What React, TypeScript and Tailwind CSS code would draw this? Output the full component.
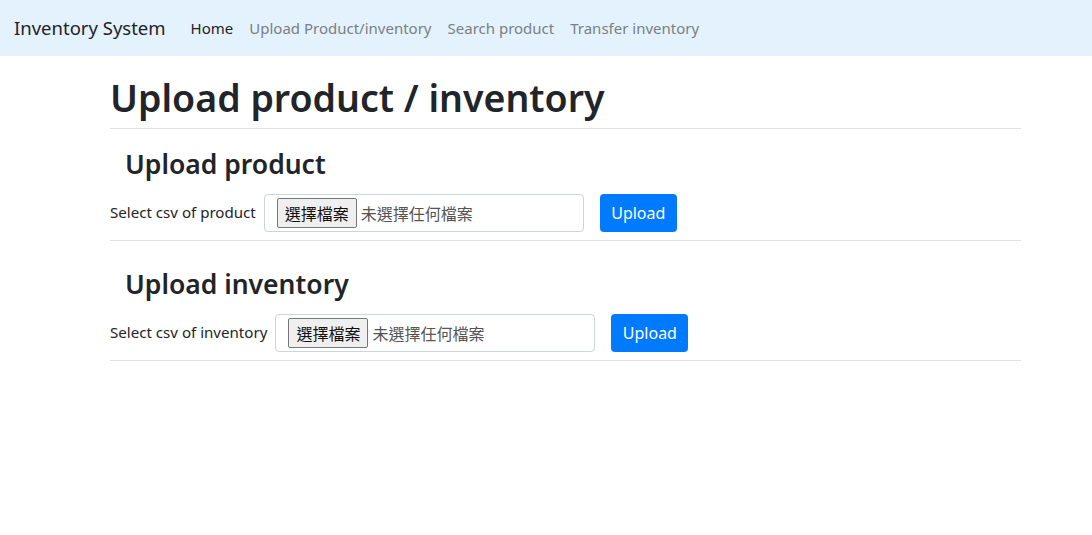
import React from "react";

const font = { fontFamily: '"Noto Sans", "Noto Sans CJK TC", sans-serif' };
const cjk = { fontFamily: '"Noto Sans CJK TC", sans-serif' };

function FileField() {
  return (
    <div className="flex h-[38px] w-[320px] items-center rounded-[4px] border border-[#ced4da] bg-white pl-[12px]">
      <span className="flex h-[30px] items-center rounded-[2px] border border-[#767676] bg-[#efefef] px-[7px] text-[16px] leading-none text-[#111]" style={cjk}>
        選擇檔案
      </span>
      <span className="ml-[4px] text-[16px] leading-none text-[#555]" style={cjk}>
        未選擇任何檔案
      </span>
    </div>
  );
}

function Section({ title, label, top }: { title: string; label: string; top: string }) {
  return (
    <div>
      <h3 className={`ml-[15px] ${top} text-[26.5px] font-semibold leading-[1.2] text-[#212529]`}>{title}</h3>
      <div className="mt-[13px] flex items-center">
        <label className="mr-[8px] text-[15.1px] text-[#212529]">{label}</label>
        <FileField />
        <button className="ml-[16px] h-[38px] w-[77px] rounded-[4px] bg-[#007bff] text-[16px] text-white">Upload</button>
      </div>
      <hr className="mt-[8px] border-t border-[#e2e2e2]" />
    </div>
  );
}

export default function App() {
  return (
    <div className="min-h-[535px] bg-white" style={font}>
      <nav className="flex h-[56px] items-center bg-[#e3f2fd] px-[14px]">
        <span className="mr-[17px] text-[18.5px] text-[#1f2326]">Inventory System</span>
        <div className="flex text-[15px]">
          <a className="px-[8px] text-[#1f2326]">Home</a>
          <a className="px-[8px] text-[#7b7f83]">Upload Product/inventory</a>
          <a className="px-[8px] text-[#7b7f83]">Search product</a>
          <a className="px-[8px] text-[#7b7f83]">Transfer inventory</a>
        </div>
      </nav>
      <main className="ml-[110px] w-[911px]">
        <h1 className="mt-[19px] text-[37.5px] font-semibold leading-[1.2] text-[#212529]">Upload product / inventory</h1>
        <hr className="mt-[8px] border-t border-[#e2e2e2]" />
        <Section title="Upload product" label="Select csv of product" top="mt-[20px]" />
        <Section title="Upload inventory" label="Select csv of inventory" top="mt-[28px]" />
      </main>
    </div>
  );
}
